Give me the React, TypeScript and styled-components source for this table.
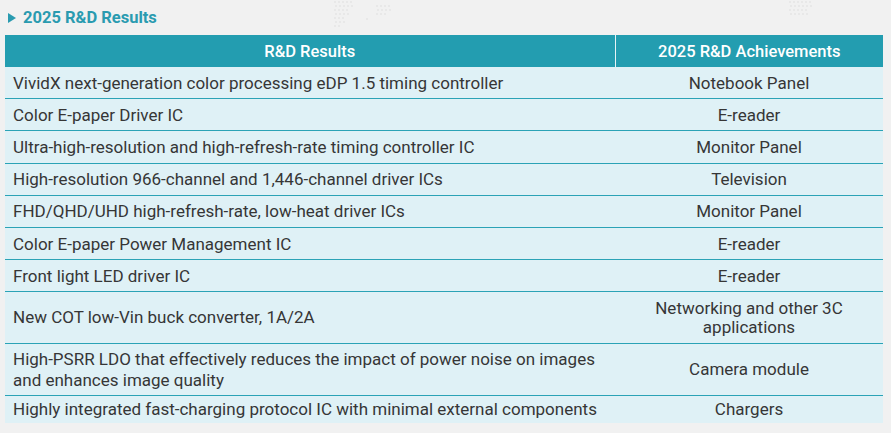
import styled, { createGlobalStyle } from 'styled-components';

interface ResultRow {
  result: string;
  field: string;
}

const rows: ResultRow[] = [
  { result: 'VividX next-generation color processing eDP 1.5 timing controller', field: 'Notebook Panel' },
  { result: 'Color E-paper Driver IC', field: 'E-reader' },
  { result: 'Ultra-high-resolution and high-refresh-rate timing controller IC', field: 'Monitor Panel' },
  { result: 'High-resolution 966-channel and 1,446-channel driver ICs', field: 'Television' },
  { result: 'FHD/QHD/UHD high-refresh-rate, low-heat driver ICs', field: 'Monitor Panel' },
  { result: 'Color E-paper Power Management IC', field: 'E-reader' },
  { result: 'Front light LED driver IC', field: 'E-reader' },
  { result: 'New COT low-Vin buck converter, 1A/2A', field: 'Networking and other 3C applications' },
  {
    result: 'High-PSRR LDO that effectively reduces the impact of power noise on images and enhances image quality',
    field: 'Camera module',
  },
  { result: 'Highly integrated fast-charging protocol IC with minimal external components', field: 'Chargers' },
];

const GlobalStyle = createGlobalStyle`
  html, body {
    margin: 0;
    background: #f1f1f1;
  }
  body {
    font-family: Roboto, "Liberation Sans", Arial, sans-serif;
  }
`;

const S = {
  Page: styled.section`
    position: relative;
    padding: 0 8px 0 5px;
    overflow: hidden;
  `,
  Dots: styled.svg`
    position: absolute;
    top: 0;
    left: 0;
    pointer-events: none;
  `,
  Title: styled.h2`
    position: relative;
    margin: 0;
    height: 35px;
    display: flex;
    align-items: center;
    gap: 7px;
    padding-left: 3px;
    font-size: 16.5px;
    font-weight: 700;
    color: #2a9bb0;
  `,
  Arrow: styled.span`
    width: 0;
    height: 0;
    border-top: 5px solid transparent;
    border-bottom: 5px solid transparent;
    border-left: 8px solid #2a9bb0;
    margin-top: 1px;
  `,
  Table: styled.table`
    position: relative;
    width: 100%;
    border-collapse: collapse;
    table-layout: fixed;
    font-size: 17px;
  `,
  Head: styled.th<{ $divider?: boolean }>`
    background: #239db0;
    color: #fff;
    font-size: 16.5px;
    font-weight: 500;
    height: 32px;
    padding: 0 8px;
    text-align: center;
    border-left: ${({ $divider }) => ($divider ? '1px solid #e6f3f6' : 'none')};
  `,
  Row: styled.tr`
    background: #dff1f6;
    & + & td {
      border-top: 1px solid #2ba3b6;
    }
    &:last-child td {
      padding-top: 3px;
      padding-bottom: 3px;
    }
  `,
  Cell: styled.td<{ $center?: boolean }>`
    padding: ${({ $center }) => ($center ? '6.6px 8px 5.6px' : '5.6px 8px 5.1px')};
    line-height: ${({ $center }) => ($center ? '19px' : '20.5px')};
    color: #363636;
    text-align: ${({ $center }) => ($center ? 'center' : 'left')};
    vertical-align: middle;
  `,
};

const dotCluster = (x0: number, y0: number, cols: number, rowsN: number, step: number) => {
  const out: JSX.Element[] = [];
  for (let r = 0; r < rowsN; r++) {
    for (let c = 0; c < cols - Math.floor(r / 2); c++) {
      out.push(<circle key={`${x0}-${r}-${c}`} cx={x0 + c * step + (r % 2) * 1} cy={y0 + r * step} r={1} />);
    }
  }
  return out;
};

export default function App() {
  return (
    <>
      <GlobalStyle />
      <S.Page>
        <S.Dots width="891" height="35" fill="#e4e4e4">
          {dotCluster(335, 2, 5, 7, 4)}
          {dotCluster(377, 6, 4, 3, 4)}
          {dotCluster(790, 2, 6, 4, 4)}
          <circle cx={367} cy={19} r={1} />
        </S.Dots>
        <S.Title>
          <S.Arrow />
          2025 R&amp;D Results
        </S.Title>
        <S.Table>
          <colgroup>
            <col style={{ width: 610 }} />
            <col />
          </colgroup>
          <thead>
            <tr>
              <S.Head>R&amp;D Results</S.Head>
              <S.Head $divider>2025 R&amp;D Achievements</S.Head>
            </tr>
          </thead>
          <tbody>
            {rows.map((row) => (
              <S.Row key={row.result}>
                <S.Cell>{row.result}</S.Cell>
                <S.Cell $center>{row.field}</S.Cell>
              </S.Row>
            ))}
          </tbody>
        </S.Table>
      </S.Page>
    </>
  );
}
